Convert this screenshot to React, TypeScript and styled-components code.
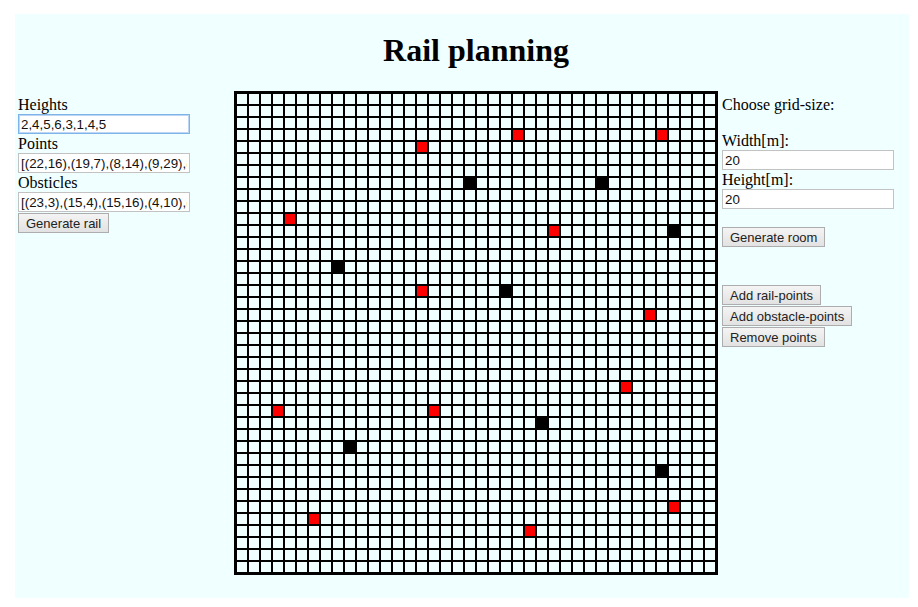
import React from "react";
import styled, { createGlobalStyle } from "styled-components";

const GlobalStyle = createGlobalStyle`
  html, body { margin: 0; padding: 0; background: #ffffff; }
  body { font-family: "Liberation Serif", "Times New Roman", serif; color: #000; }
`;

const Page = styled.div`
  margin: 14px 9px 9px 15px;
  height: 584px;
  box-sizing: border-box;
  background: #f0ffff;
  padding: 0 0 0 3px;
  display: grid;
  grid-template-columns: 216px 484px 1fr;
  grid-template-rows: auto 1fr;
`;

const Title = styled.h1`
  grid-column: 2;
  grid-row: 1;
  margin: 18px 0 22px;
  text-align: center;
  font-size: 32px;
  line-height: 37px;
  font-weight: bold;
`;

const SidePanel = styled.div<{ $side: "left" | "right" }>`
  grid-column: ${(p) => (p.$side === "left" ? 1 : 3)};
  grid-row: 2;
  padding-top: 4px;
  padding-left: ${(p) => (p.$side === "left" ? 0 : 4)}px;
  display: flex;
  flex-direction: column;
  align-items: flex-start;
`;

const Label = styled.label<{ $gap?: number }>`
  display: block;
  font-size: 16px;
  line-height: 19px;
  margin-bottom: ${(p) => p.$gap ?? 0}px;
`;

const TextInput = styled.input<{ $focused?: boolean }>`
  display: block;
  width: 172px;
  height: 20px;
  box-sizing: border-box;
  margin: 0;
  padding: 0 2px;
  font-family: "Liberation Sans", Arial, sans-serif;
  font-size: 13.33px;
  color: #111;
  background: #ffffff;
  border: 1px solid ${(p) => (p.$focused ? "#7eb4ea" : "#c2c2c2")};
  box-shadow: ${(p) => (p.$focused ? "inset 0 0 0 1px #bcd6f3" : "none")};
  outline: none;
`;

const Button = styled.button<{ $mt?: number }>`
  display: block;
  height: 20px;
  margin: ${(p) => p.$mt ?? 0}px 0 1px 0;
  padding: 0 7px;
  font-family: "Liberation Sans", Arial, sans-serif;
  font-size: 13px;
  color: #222;
  background: linear-gradient(#f4f4f4, #e2e2e2);
  border: 1px solid #adadad;
  border-radius: 0;
  white-space: nowrap;
  cursor: pointer;
`;

const ButtonGroup = styled.div`
  margin-top: 37px;
  display: flex;
  flex-direction: column;
  align-items: flex-start;
`;

const Board = styled.div`
  grid-column: 2;
  grid-row: 2;
  align-self: start;
  justify-self: start;
  display: grid;
  grid-template-columns: repeat(40, 10px);
  grid-auto-rows: 10px;
  gap: 2px;
  padding: 1px;
  border: 2px solid #000;
  background: #000;
`;

type CellKind = "empty" | "point" | "obstacle";

const Cell = styled.div<{ $kind: CellKind }>`
  background: ${(p) =>
    p.$kind === "point" ? "#000000" : p.$kind === "obstacle" ? "#ff0000" : "#f0ffff"};
`;

const points: [number, number][] = [
  [22, 16], [19, 7], [8, 14], [9, 29], [30, 7], [36, 11], [25, 27], [35, 31],
];
const obstacles: [number, number][] = [
  [23, 3], [15, 4], [15, 16], [4, 10], [35, 3], [26, 11], [34, 18], [32, 24],
  [3, 26], [16, 26], [36, 34], [6, 35], [24, 36],
];

const fmt = (list: [number, number][]) => "[" + list.map(([x, y]) => `(${x},${y})`).join(",") + "]";

const SIZE = 40;

export default function App() {
  const pointSet = new Set(points.map(([x, y]) => `${x},${y}`));
  const obstacleSet = new Set(obstacles.map(([x, y]) => `${x},${y}`));
  const cells: React.ReactNode[] = [];
  for (let r = 0; r < SIZE; r++) {
    for (let c = 0; c < SIZE; c++) {
      const key = `${c},${r}`;
      const kind: CellKind = pointSet.has(key) ? "point" : obstacleSet.has(key) ? "obstacle" : "empty";
      cells.push(<Cell key={key} $kind={kind} />);
    }
  }

  return (
    <>
      <GlobalStyle />
      <Page>
        <Title>Rail planning</Title>
        <SidePanel $side="left">
          <Label>Heights</Label>
          <TextInput $focused defaultValue="2,4,5,6,3,1,4,5" />
          <Label>Points</Label>
          <TextInput defaultValue={fmt(points)} />
          <Label>Obsticles</Label>
          <TextInput defaultValue={fmt(obstacles)} />
          <Button $mt={1}>Generate rail</Button>
        </SidePanel>
        <Board>{cells}</Board>
        <SidePanel $side="right">
          <Label $gap={17}>Choose grid-size:</Label>
          <Label>Width[m]:</Label>
          <TextInput defaultValue="20" />
          <Label>Height[m]:</Label>
          <TextInput defaultValue="20" />
          <Button $mt={18}>Generate room</Button>
          <ButtonGroup>
            <Button>Add rail-points</Button>
            <Button>Add obstacle-points</Button>
            <Button>Remove points</Button>
          </ButtonGroup>
        </SidePanel>
      </Page>
    </>
  );
}
